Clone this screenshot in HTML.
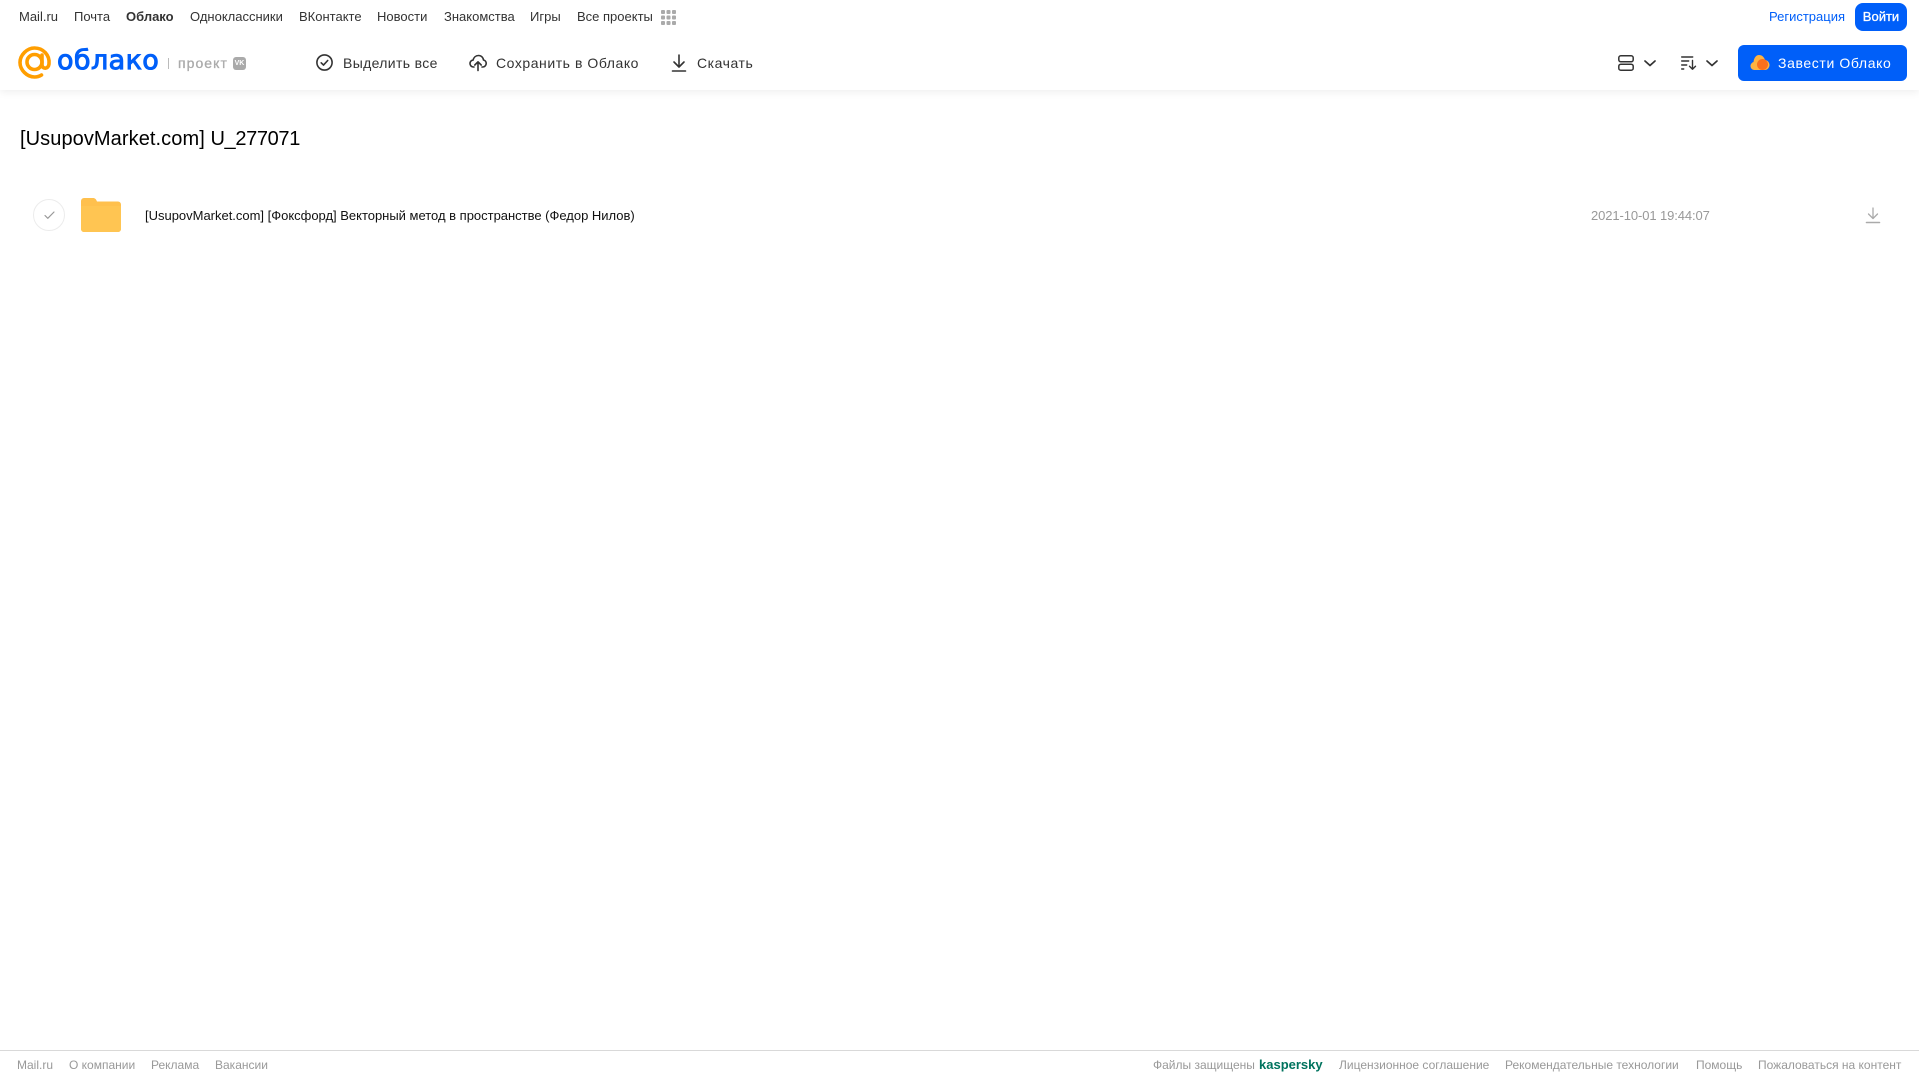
<!DOCTYPE html>
<html lang="ru"><head><meta charset="utf-8"><title>Облако</title>
<style>
html,body{margin:0;padding:0;background:#fff;width:1919px;height:1079px;overflow:hidden}
body{position:relative;font-family:"Liberation Sans",Arial,sans-serif}
.t{position:absolute;white-space:nowrap;line-height:20px}
.n{top:7px;font-size:13px;color:#333}
.a{top:53px;font-size:14px;color:#333;letter-spacing:.55px}
.f{top:1055px;font-size:12px;color:#999}
svg{position:absolute;overflow:visible}
</style></head><body>
<div style="position:absolute;left:0;top:0;width:1919px;height:90px;background:#fff;box-shadow:0 2px 8px rgba(0,0,0,.07)"></div>

<span class="t n" style="left:19px">Mail.ru</span>
<span class="t n" style="left:74px">Почта</span>
<span class="t n" style="left:126px;font-weight:bold">Облако</span>
<span class="t n" style="left:190px">Одноклассники</span>
<span class="t n" style="left:299px">ВКонтакте</span>
<span class="t n" style="left:377px">Новости</span>
<span class="t n" style="left:444px">Знакомства</span>
<span class="t n" style="left:530px">Игры</span>
<span class="t n" style="left:577px">Все проекты</span>
<svg style="left:661px;top:10px" width="15" height="15" fill="#aaa"><rect x="0" y="0" width="4" height="4" rx="1"/><rect x="5.500" y="0" width="4" height="4" rx="1"/><rect x="11" y="0" width="4" height="4" rx="1"/><rect x="0" y="5.500" width="4" height="4" rx="1"/><rect x="5.500" y="5.500" width="4" height="4" rx="1"/><rect x="11" y="5.500" width="4" height="4" rx="1"/><rect x="0" y="11" width="4" height="4" rx="1"/><rect x="5.500" y="11" width="4" height="4" rx="1"/><rect x="11" y="11" width="4" height="4" rx="1"/></svg>
<span class="t n" style="left:1769px;color:#005ff9">Регистрация</span>
<div style="position:absolute;left:1855px;top:3px;width:52px;height:28px;border-radius:8px;background:#005ff9;color:#fff;font-size:13px;-webkit-text-stroke:.3px #fff;line-height:27px;text-align:center">Войти</div>

<svg style="left:18px;top:46px" width="34" height="34" fill="none"><circle cx="16.500" cy="16" r="7.500" stroke="#ff9e00" stroke-width="3.600"/><path d="M24 9v9.500c0 5 6.400 5 7-.5 1-9-6-16-14.500-16C9 2 2 9 2 16.500S9 31 16.500 31c3 0 5-.7 7-2" stroke="#ff9e00" stroke-width="3.600" stroke-linecap="round"/></svg>
<span class="t" style="left:57px;top:46px;font-size:27px;line-height:30px;font-family:'DejaVu Sans','Liberation Sans',sans-serif;color:#005ff9;-webkit-text-stroke:1px #005ff9;letter-spacing:.4px">облако</span>
<div style="position:absolute;left:168px;top:58px;width:1px;height:11px;background:#bbb"></div>
<span class="t" style="left:178px;top:53px;font-size:14px;color:#aaa;-webkit-text-stroke:.3px #aaa;letter-spacing:1.05px">проект</span>
<div style="position:absolute;left:233px;top:57px;width:13px;height:13px;border-radius:3px;background:#aaa;color:#fff;font-size:7px;font-weight:bold;line-height:13px;text-align:center">VK</div>

<svg style="left:316px;top:54px" width="17" height="17" fill="none" stroke="#333" stroke-width="1.600"><circle cx="8.500" cy="8.500" r="7.600"/><path d="M5.200 8.800l2.300 2.300 4.200-4.600" stroke-linecap="round" stroke-linejoin="round"/></svg>
<span class="t a" style="left:343px;letter-spacing:.35px">Выделить все</span>
<svg style="left:469px;top:54px" width="18" height="17" fill="none" stroke="#333" stroke-width="1.600" stroke-linecap="round" stroke-linejoin="round"><path d="M5 13H4.500C2.500 13 1 11.500 1 9.500S2.500 6.200 4 6.200C4.700 3.500 6.800 1.500 9.500 1.500c2.800 0 4.700 2 5 4.500 1.500.3 2.700 1.700 2.700 3.400 0 2-1.500 3.600-3.500 3.600H13"/><path d="M9 16.500V8M5.800 11L9 7.800 12.200 11"/></svg>
<span class="t a" style="left:496px">Сохранить в Облако</span>
<svg style="left:671px;top:54px" width="16" height="18" fill="none" stroke="#333" stroke-width="1.600" stroke-linecap="round" stroke-linejoin="round"><path d="M8 1v11.500M3 8l5 5 5-5M1.500 17h13"/></svg>
<span class="t a" style="left:697px">Скачать</span>

<svg style="left:1618px;top:55px" width="16" height="16" fill="none" stroke="#333" stroke-width="1.500"><rect x=".8" y=".8" width="14.400" height="6" rx="2"/><rect x=".8" y="9.200" width="14.400" height="6" rx="2"/></svg>
<svg style="left:1644px;top:60px" width="12" height="7" fill="none" stroke="#333" stroke-width="1.700" stroke-linecap="round" stroke-linejoin="round"><path d="M1 1l5 4.500L11 1"/></svg>
<svg style="left:1681px;top:56px" width="16" height="14" fill="none" stroke="#333" stroke-width="1.400" stroke-linecap="round" stroke-linejoin="round"><path d="M.7 1h11M.7 5h7M.7 9h5M.7 13h2"/><path d="M11.500 4.500V13M8.500 10.300l3 3 3-3"/></svg>
<svg style="left:1706px;top:60px" width="12" height="7" fill="none" stroke="#333" stroke-width="1.700" stroke-linecap="round" stroke-linejoin="round"><path d="M1 1l5 4.500L11 1"/></svg>

<div style="position:absolute;left:1738px;top:45px;width:169px;height:36px;border-radius:6px;background:#005ff9"></div>
<svg style="left:1750px;top:54px" width="20" height="17"><path d="M4.500 16C2 16 .5 14 .5 12S2 8.500 3.500 8C4 4 6 1 9 1c3 0 5 2 6 5 2.500 .3 4.500 2.500 4.500 5s-2 5-4.800 5z" fill="#ffb340"/><circle cx="12.500" cy="10.500" r="5.500" fill="#f9701e"/></svg>
<span class="t a" style="left:1778px;color:#fff;letter-spacing:.62px">Завести Облако</span>

<span class="t" style="left:20px;top:127px;font-size:20px;line-height:24px;color:#000;letter-spacing:.08px">[UsupovMarket.com] <span style="letter-spacing:-.35px">U_277071</span></span>

<div style="position:absolute;left:33px;top:199px;width:30px;height:30px;border:1px solid #ececec;border-radius:50%"></div>
<svg style="left:44px;top:211px" width="11" height="9" fill="none" stroke="#999" stroke-width="1.200" stroke-linecap="round" stroke-linejoin="round"><path d="M1 4.500l2.800 2.800L10 1"/></svg>
<svg style="left:81px;top:198px" width="40" height="34"><path d="M0 3a3 3 0 0 1 3-3h9c2 0 3 1 4 3.500H37a3 3 0 0 1 3 3V31a3 3 0 0 1-3 3H3a3 3 0 0 1-3-3z" fill="#ffc04d"/><path d="M0 8h40v23a3 3 0 0 1-3 3H3a3 3 0 0 1-3-3z" fill="#ffc552"/></svg>
<span class="t" style="left:145px;top:206px;font-size:13px;color:#111;letter-spacing:-.01px">[UsupovMarket.com] [Фоксфорд] Векторный метод в пространстве (Федор Нилов)</span>
<span class="t" style="left:1591px;top:206px;font-size:13px;color:#999;letter-spacing:-.1px">2021-10-01 19:44:07</span>
<svg style="left:1866px;top:207px" width="14" height="17" fill="none" stroke="#aaa" stroke-width="1.300" stroke-linecap="round" stroke-linejoin="round"><path d="M7 1v10M2.500 7L7 11.500 11.500 7"/><path d="M.5 15.500h13" stroke-width="1.600"/></svg>

<div style="position:absolute;left:0;top:1050px;width:1919px;height:1px;background:#d9d9d9"></div>
<span class="t f" style="left:17px">Mail.ru</span>
<span class="t f" style="left:69px">О компании</span>
<span class="t f" style="left:151px">Реклама</span>
<span class="t f" style="left:215px">Вакансии</span>
<span class="t f" style="left:1153px">Файлы защищены</span>
<span class="t f" style="left:1259px;color:#00735e;font-weight:bold;font-size:13px">kaspersky</span>
<span class="t f" style="left:1339px">Лицензионное соглашение</span>
<span class="t f" style="left:1505px">Рекомендательные технологии</span>
<span class="t f" style="left:1696px">Помощь</span>
<span class="t f" style="left:1758px">Пожаловаться на контент</span>
</body></html>
